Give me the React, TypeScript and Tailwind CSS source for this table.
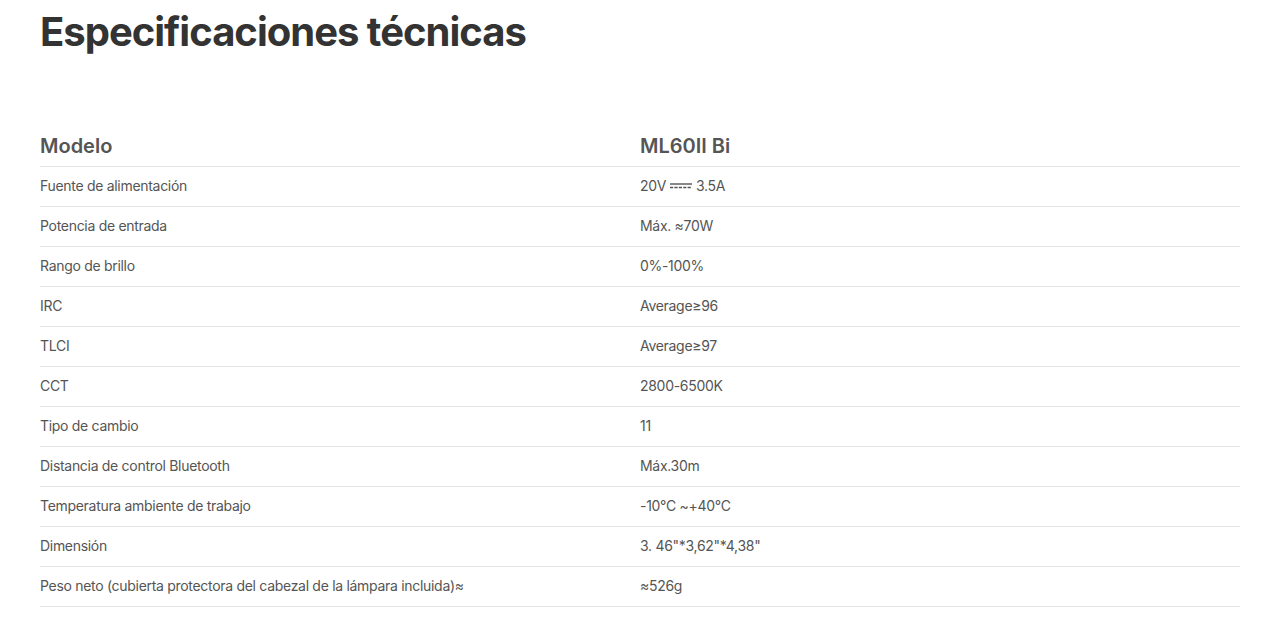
import React from 'react';

const Dc = () => (
  <svg width="22" height="8" viewBox="0 0 22 8" className="inline-block mx-[4px] align-[1px]" aria-label="⎓">
    <line x1="0" y1="2" x2="22" y2="2" stroke="#555" strokeWidth="1.4" />
    <line x1="0" y1="5.5" x2="22" y2="5.5" stroke="#555" strokeWidth="1.4" strokeDasharray="3.2 1.2" />
  </svg>
);

const specs: { l: string; v: React.ReactNode }[] = [
  { l: 'Fuente de alimentación', v: <>20V<Dc />3.5A</> },
  { l: 'Potencia de entrada', v: 'Máx. ≈70W' },
  { l: 'Rango de brillo', v: '0%-100%' },
  { l: 'IRC', v: 'Average≥96' },
  { l: 'TLCI', v: 'Average≥97' },
  { l: 'CCT', v: '2800-6500K' },
  { l: 'Tipo de cambio', v: '11' },
  { l: 'Distancia de control Bluetooth', v: 'Máx.30m' },
  { l: 'Temperatura ambiente de trabajo', v: '-10°C ~+40°C' },
  { l: 'Dimensión', v: '3. 46"*3,62"*4,38"' },
  { l: 'Peso neto (cubierta protectora del cabezal de la lámpara incluida)≈', v: '≈526g' },
];

const App: React.FC = () => {
  return (
    <div className="bg-white pl-10 font-['Inter',sans-serif]">
      <div className="w-[1200px]">
        <h1 className="text-[40px] leading-[64px] font-bold text-[#333] tracking-[-1px]">Especificaciones técnicas</h1>

        <div className="mt-[63px]">
          <div className="grid grid-cols-2 h-10 items-center border-b border-[#e5e5e5] text-[20px] font-semibold text-[#555] pb-[2px]">
            <div>Modelo</div>
            <div>ML60II Bi</div>
          </div>
          {specs.map((s, i) => (
            <div key={i} className="grid grid-cols-2 h-10 items-center border-b border-[#e5e5e5] text-[14px] tracking-[-0.3px] text-[#555] pb-[2px]">
              <div>{s.l}</div>
              <div>{s.v}</div>
            </div>
          ))}
        </div>
      </div>
    </div>
  );
};

export default App;
